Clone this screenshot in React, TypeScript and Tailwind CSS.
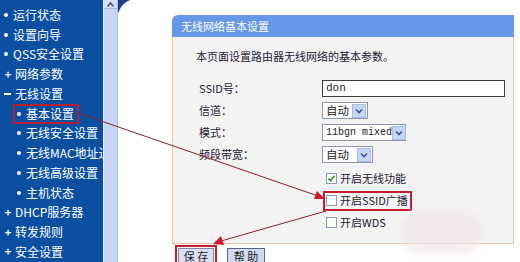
import React from "react";

type NavItem = { label: string; mark: "dot" | "plus" | "minus"; sub?: boolean; boxed?: boolean };

const navItems: NavItem[] = [
  { label: "运行状态", mark: "dot" },
  { label: "设置向导", mark: "dot" },
  { label: "QSS安全设置", mark: "dot" },
  { label: "网络参数", mark: "plus" },
  { label: "无线设置", mark: "minus" },
  { label: "基本设置", mark: "dot", sub: true, boxed: true },
  { label: "无线安全设置", mark: "dot", sub: true },
  { label: "无线MAC地址过滤", mark: "dot", sub: true },
  { label: "无线高级设置", mark: "dot", sub: true },
  { label: "主机状态", mark: "dot", sub: true },
  { label: "DHCP服务器", mark: "plus" },
  { label: "转发规则", mark: "plus" },
  { label: "安全设置", mark: "plus" },
];

const font = { fontFamily: '"Noto Sans CJK SC", "Liberation Sans", sans-serif' };
const mono = { fontFamily: '"Liberation Mono", "Noto Sans CJK SC", monospace' };

const Mark: React.FC<{ mark: NavItem["mark"] }> = ({ mark }) => {
  if (mark === "dot") return <span className="shrink-0 inline-block w-[4px] h-[4px] bg-white rounded-full mr-[5px]" />;
  if (mark === "plus")
    return <span className="shrink-0 inline-block w-[8px] text-center text-[11px] font-bold mr-[3px] leading-none">+</span>;
  return <span className="shrink-0 inline-block w-[7px] h-[2px] bg-white mr-[4px]" />;
};

const Select: React.FC<{ value: string; width: string; isMono?: boolean }> = ({ value, width, isMono }) => (
  <div className={`${width} h-[17px] flex items-center justify-between border border-[#8d97a8] bg-white pl-[3px]`}>
    <span
      className={`whitespace-nowrap leading-none text-[#222] ${isMono ? "text-[10px]" : "text-[11.5px]"}`}
      style={isMono ? mono : undefined}
    >
      {value}
    </span>
    <span className="shrink-0 w-[14px] h-[14px] mr-[1px] bg-[#c6d6f4] border border-[#a9bde4] flex items-center justify-center">
      <svg width="8" height="6" viewBox="0 0 8 6">
        <path d="M1 1.5 L4 4.5 L7 1.5" stroke="#34569a" strokeWidth="1.6" fill="none" />
      </svg>
    </span>
  </div>
);

const Check: React.FC<{ checked?: boolean }> = ({ checked }) => (
  <span className="shrink-0 w-[11px] h-[11px] border border-[#8a9bb8] bg-white flex items-center justify-center mr-[3px]">
    {checked && (
      <svg width="9" height="9" viewBox="0 0 9 9">
        <path d="M1.5 4.5 L3.5 6.8 L7.5 1.8" stroke="#2f8a2f" strokeWidth="1.6" fill="none" />
      </svg>
    )}
  </span>
);

export default function App() {
  return (
    <div className="relative w-[520px] h-[262px] overflow-hidden bg-white flex" style={font}>
      {/* left menu */}
      <div className="shrink-0 w-[103px] h-full overflow-hidden bg-[#0b4fa2] pt-[5px] text-white">
        {navItems.map((item) => (
          <div
            key={item.label}
            className={`h-[19.75px] flex items-center text-[12px] whitespace-nowrap ${item.sub ? "pl-[17px]" : "pl-[4px]"}`}
          >
            {item.boxed ? (
              <span className="flex items-center border-2 border-[#b3202e] h-[20px] pl-[2px] pr-[3px] -ml-[4px]">
                <Mark mark={item.mark} />
                {item.label}
              </span>
            ) : (
              <>
                <Mark mark={item.mark} />
                {item.label}
              </>
            )}
          </div>
        ))}
      </div>

      {/* scrollbar */}
      <div className="shrink-0 w-[15px] h-full bg-[#c7d4f6] border-l border-[#eef2fd] border-r border-r-[#aebde6] flex flex-col items-center">
        <div className="w-full h-[9px] bg-[#d6e0fa] border-b border-[#aebde6] flex items-center justify-center">
          <svg width="7" height="5" viewBox="0 0 7 5">
            <path d="M0.5 4.5 L3.5 1 L6.5 4.5" stroke="#3a4f86" strokeWidth="1.5" fill="none" />
          </svg>
        </div>
      </div>

      {/* content */}
      <div className="relative flex-1 h-full pl-[54px] pt-[15px]">
        <svg className="absolute left-0 top-0" width="14" height="14" viewBox="0 0 14 14">
          <path d="M0 0 H12 Q4 3 0 13 Z" fill="#1d3f86" />
        </svg>

        <div className="w-[342px]">
          <div className="h-[22px] rounded-tl-[6px] bg-[#6598e8] text-white text-[11px] leading-[22px] pl-[9px]">
            无线网络基本设置
          </div>
          <div className="h-[207px] bg-[#f3f3f3] border-x border-b border-[#e6c8a6] pl-[23px] pt-[12px] text-[#1f2233]">
            <div className="text-[11px] leading-[15px]">本页面设置路由器无线网络的基本参数。</div>

            <div className="mt-[16px] pl-[3px] flex flex-col gap-[5px] text-[11px]">
              <div className="flex items-center h-[17px]">
                <span className="w-[123px]">SSID号：</span>
                <div className="w-[183px] h-[17px] border border-[#3d3d3d] bg-white pl-[3px] flex items-center">
                  <span className="text-[11px] leading-none" style={mono}>
                    don
                  </span>
                </div>
              </div>
              <div className="flex items-center h-[17px]">
                <span className="w-[123px]">信道：</span>
                <Select value="自动" width="w-[46px]" />
              </div>
              <div className="flex items-center h-[17px]">
                <span className="w-[123px]">模式：</span>
                <Select value="11bgn mixed" width="w-[84px]" isMono />
              </div>
              <div className="flex items-center h-[17px]">
                <span className="w-[123px]">频段带宽：</span>
                <Select value="自动" width="w-[51px]" />
              </div>
            </div>

            <div className="mt-[7px] pl-[130px] flex flex-col gap-[5px] text-[11px]">
              <div className="flex items-center h-[17px]">
                <Check checked />
                开启无线功能
              </div>
              <div className="flex items-center h-[17px]">
                <span className="flex items-center border-2 border-[#c41f2c] h-[20px] -ml-[3px] pl-[1px] pr-[2px]">
                  <Check />
                  开启SSID广播
                </span>
              </div>
              <div className="flex items-center h-[17px]">
                <Check />
                开启WDS
              </div>
            </div>
          </div>

          <div className="flex items-start gap-[10px] pl-[3px] pt-[1px] whitespace-nowrap">
            <div className="border-2 border-[#c41f2c] p-[1px]">
              <div className="w-[36px] h-[17px] bg-[#dcdff3] border border-[#7f88a8] text-[11px] text-[#222] flex items-center justify-center">
                保&nbsp;存
              </div>
            </div>
            <div className="mt-[3px] w-[38px] h-[17px] bg-[#d3d8f1] border border-[#5a6488] text-[11px] text-[#222] flex items-center justify-center">
              帮&nbsp;助
            </div>
          </div>
        </div>
      </div>

      {/* watermark smudge */}
      <div className="absolute left-[402px] top-[210px] w-[80px] h-[44px] rounded-[20px] bg-[#f1e6e9] opacity-70 blur-[3px]" />

      {/* annotation arrows */}
      <svg className="absolute left-0 top-0 pointer-events-none" width="520" height="262" viewBox="0 0 520 262">
        <line x1="78" y1="113" x2="318" y2="196" stroke="#8e1d2b" strokeWidth="1" />
        <polygon points="325,199 314,199 317,191" fill="#d0182a" />
        <line x1="326" y1="211" x2="221" y2="241" stroke="#8e1d2b" strokeWidth="1" />
        <polygon points="213,244 221,236 224,245" fill="#d0182a" />
      </svg>
    </div>
  );
}
